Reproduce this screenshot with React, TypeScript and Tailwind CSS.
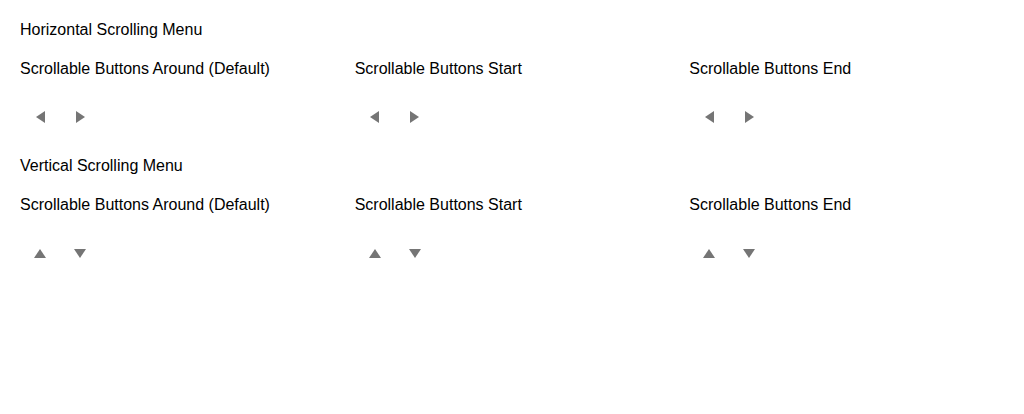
import React from 'react';

type Dir = 'left' | 'right' | 'up' | 'down';

const Arrow: React.FC<{ dir: Dir }> = ({ dir }) => {
    const horizontal = dir === 'left' || dir === 'right';
    const w = horizontal ? 9 : 12;
    const h = horizontal ? 12 : 9;
    const points = {
        left: '9,0 0,6 9,12',
        right: '0,0 9,6 0,12',
        up: '0,9 6,0 12,9',
        down: '0,0 12,0 6,9',
    }[dir];
    return (
        <button className="w-10 h-10 flex items-center justify-center">
            <svg width={w} height={h} viewBox={`0 0 ${w} ${h}`}>
                <polygon points={points} fill="#757575" />
            </svg>
        </button>
    );
};

const variants = ['Scrollable Buttons Around (Default)', 'Scrollable Buttons Start', 'Scrollable Buttons End'];

const MenuSection: React.FC<{ title: string; vertical?: boolean }> = ({ title, vertical }) => (
    <div>
        <div className="h-5 leading-5">{title}</div>
        <div className="grid grid-cols-3 gap-5 mt-[19px]">
            {variants.map(v => (
                <div key={v}>
                    <div className="h-5 leading-5">{v}</div>
                    <div className="flex mt-[18px]">
                        <Arrow dir={vertical ? 'up' : 'left'} />
                        <Arrow dir={vertical ? 'down' : 'right'} />
                    </div>
                </div>
            ))}
        </div>
    </div>
);

export default function App() {
    return (
        <div className="p-5 text-base text-black bg-white flex flex-col gap-[19px]" style={{ fontFamily: '"Liberation Sans", Arial, sans-serif' }}>
            <MenuSection title="Horizontal Scrolling Menu" />
            <MenuSection title="Vertical Scrolling Menu" vertical />
        </div>
    );
}
